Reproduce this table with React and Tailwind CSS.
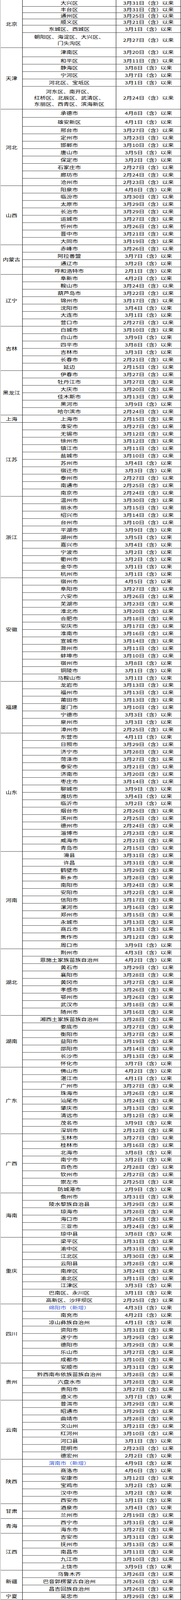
import React, { useEffect, useState } from "react";

// natural height of the whole table in px
const TABLE_HEIGHT = 5623;

// [area, date, height class, added]; rows without a height class are 26px tall
const provinces = [
  {
    name: "北京",
    rows: [
      ["大兴区", "3月31日", "h-[23px]"],
      ["丰台区", "3月31日", "h-[22px]"],
      ["通州区", "3月25日", "h-[22px]"],
      ["顺义区", "3月21日", "h-[22px]"],
      ["东城区、西城区", "3月1日"],
      [["朝阳区、海淀区、大兴区、", "门头沟区"], "2月27日", "h-[53px]"],
    ],
  },
  {
    name: "天津",
    rows: [
      ["津南区", "3月20日", "h-[32px]"],
      ["和平区", "3月11日"],
      ["静海区", "3月8日"],
      ["宁河区", "3月7日"],
      ["河北区、宝坻区", "3月1日"],
      [["河东区、南开区、", "红桥区、北辰区、武清区、", "东丽区、西青区、滨海新区"], "2月24日", "h-[80px]"],
    ],
  },
  {
    name: "河北",
    rows: [
      ["承德市", "4月8日", "h-[29px]"],
      ["雄安新区", "4月1日", "h-[32px]"],
      ["邢台市", "3月27日"],
      ["定州市", "3月23日"],
      ["邯郸市", "3月10日"],
      ["唐山市", "3月5日"],
      ["保定市", "3月2日"],
      ["石家庄市", "2月27日"],
      ["廊坊市", "2月24日"],
      ["沧州市", "2月23日"],
    ],
  },
  {
    name: "山西",
    rows: [
      ["阳泉市", "4月8日"],
      ["临汾市", "3月30日"],
      ["太原市", "3月29日"],
      ["长治市", "3月29日"],
      ["运城市", "3月27日"],
      ["忻州市", "3月26日"],
      ["晋中市", "3月21日"],
      ["大同市", "3月19日"],
    ],
  },
  {
    name: "内蒙古",
    rows: [
      ["赤峰市", "3月26日"],
      ["阿拉善盟", "3月7日"],
      ["通辽市", "3月2日"],
      ["呼和浩特市", "2月1日"],
    ],
  },
  {
    name: "辽宁",
    rows: [
      ["阜新市", "4月2日"],
      ["鞍山市", "3月24日"],
      ["葫芦岛市", "3月22日"],
      ["锦州市", "3月17日"],
      ["沈阳市", "3月4日"],
      ["大连市", "3月1日"],
      ["营口市", "2月27日"],
    ],
  },
  {
    name: "吉林",
    rows: [
      ["白城市", "3月10日"],
      ["白山市", "3月9日"],
      ["四平市", "3月8日"],
      ["吉林市", "3月3日"],
      ["长春市", "2月21日"],
      ["延边", "2月15日"],
    ],
  },
  {
    name: "黑龙江",
    rows: [
      ["伊春市", "3月27日"],
      ["牡丹江市", "3月27日"],
      ["大庆市", "3月20日"],
      ["佳木斯市", "3月13日"],
      ["黑河市", "3月9日"],
      ["哈尔滨市", "2月24日"],
    ],
  },
  { name: "上海", rows: [["上海市", "2月15日"]] },
  {
    name: "江苏",
    rows: [
      ["淮安市", "3月27日"],
      ["无锡市", "3月12日"],
      ["徐州市", "3月12日"],
      ["镇江市", "3月11日"],
      ["盐城市", "3月10日"],
      ["苏州市", "3月4日"],
      ["宿迁市", "3月3日"],
      ["泰州市", "2月27日"],
      ["南通市", "2月25日"],
      ["南京市", "2月24日"],
    ],
  },
  {
    name: "浙江",
    rows: [
      ["温州市", "3月30日"],
      ["丽水市", "3月15日"],
      ["绍兴市", "3月14日"],
      ["台州市", "3月10日"],
      ["平湖市", "3月9日"],
      ["湖州市", "3月5日"],
      ["嘉兴市", "3月4日"],
      ["宁波市", "3月2日"],
      ["衢州市", "3月2日"],
      ["金华市", "3月1日"],
      ["杭州市", "3月1日"],
    ],
  },
  {
    name: "安徽",
    rows: [
      ["宿州市", "4月5日"],
      ["阜阳市", "3月27日"],
      ["六安市", "3月26日"],
      ["芜湖市", "3月23日"],
      ["淮北市", "3月20日"],
      ["合肥市", "3月18日"],
      ["安庆市", "3月17日"],
      ["淮南市", "3月16日"],
      ["宣城市", "3月14日"],
      ["滁州市", "3月11日"],
      ["蚌埠市", "3月10日"],
      ["宿州市", "3月8日"],
      ["铜陵市", "3月1日"],
      ["马鞍山市", "3月1日"],
    ],
  },
  {
    name: "福建",
    rows: [
      ["龙岩市", "3月13日"],
      ["福州市", "3月13日"],
      ["莆田市", "3月13日"],
      ["厦门市", "3月10日"],
      ["宁德市", "3月3日"],
      ["泉州市", "3月3日"],
      ["漳州市", "2月25日"],
    ],
  },
  {
    name: "山东",
    rows: [
      ["东营市", "4月1日"],
      ["日照市", "3月29日"],
      ["济宁市", "3月28日"],
      ["菏泽市", "3月27日"],
      ["泰安市", "3月21日"],
      ["济南市", "3月20日"],
      ["枣庄市", "3月14日"],
      ["聊城市", "3月9日"],
      ["潍坊市", "3月4日"],
      ["临沂市", "3月2日"],
      ["烟台市", "2月26日"],
      ["滨州市", "2月25日"],
      ["德州市", "2月24日"],
      ["淄博市", "2月23日"],
      ["威海市", "2月21日"],
      ["青岛市", "2月15日"],
    ],
  },
  {
    name: "河南",
    rows: [
      ["滑县", "3月31日"],
      ["许昌", "3月31日"],
      ["鹤壁市", "3月29日"],
      ["新乡市", "3月28日"],
      ["南阳市", "3月24日"],
      ["安阳市", "3月22日"],
      ["信阳市", "3月17日"],
      ["漯河市", "3月16日"],
      ["郑州市", "3月15日"],
      ["永城市", "3月13日"],
      ["商丘市", "3月13日"],
      ["焦作市", "3月12日", "h-[28px]"],
      ["周口市", "3月9日", "h-[28px]"],
    ],
  },
  {
    name: "湖北",
    rows: [
      ["荆州市", "4月3日"],
      ["恩施土家族苗族自治州", "4月2日"],
      ["黄石市", "3月29日"],
      ["襄阳市", "3月28日"],
      ["黄冈市", "3月27日"],
      ["孝感市", "3月26日"],
      ["鄂州市", "3月26日"],
      ["武汉市", "3月18日"],
      ["随州市", "3月16日"],
    ],
  },
  {
    name: "湖南",
    rows: [
      ["湘西土家族苗族自治州", "3月28日"],
      ["娄底市", "3月27日"],
      ["衡阳市", "3月27日"],
      ["益阳市", "3月19日"],
      ["邵阳市", "3月14日"],
      ["长沙市", "3月13日"],
      ["怀化市", "3月7日"],
    ],
  },
  {
    name: "广东",
    rows: [
      ["佛山市", "4月2日"],
      ["湛江市", "4月1日"],
      ["广州市", "3月27日"],
      ["珠海市", "3月26日"],
      ["汕尾市", "3月24日"],
      ["肇庆市", "3月13日"],
      ["清远市", "3月12日"],
      ["茂名市", "3月9日"],
      ["深圳市", "2月12日"],
    ],
  },
  {
    name: "广西",
    rows: [
      ["玉林市", "3月27日"],
      ["桂林市", "3月16日"],
      ["北海市", "3月8日"],
      ["南宁市", "3月2日"],
      ["百色市", "2月28日"],
      ["钦州市", "2月27日"],
      ["崇左市", "2月25日"],
      ["防城港市", "2月9日"],
    ],
  },
  {
    name: "海南",
    rows: [
      ["儋州市", "3月31日"],
      ["陵水黎族自治县", "3月29日"],
      ["琼海市", "3月28日"],
      ["海口市", "3月26日"],
      ["三亚市", "3月24日"],
      ["琼中县", "3月8日"],
    ],
  },
  {
    name: "重庆",
    rows: [
      ["梁平区", "3月31日"],
      ["渝中区", "3月31日"],
      ["江北区", "3月30日"],
      ["云阳县", "3月28日"],
      ["南岸区", "3月24日"],
      ["渝北区", "3月11日"],
      ["江津区", "3月3日"],
      ["巴南区、永川区", "3月1日"],
      ["高新区、沙坪坝区", "2月25日"],
    ],
  },
  {
    name: "四川",
    rows: [
      ["绵阳市（新增）", "4月3日", null, true],
      ["南充市", "4月2日"],
      ["凉山彝族自治州", "4月1日"],
      ["资阳市", "3月31日"],
      ["遂宁市", "3月29日"],
      ["德阳市", "3月29日"],
      ["乐山市", "3月27日"],
      ["成都市", "3月10日"],
    ],
  },
  {
    name: "贵州",
    rows: [
      ["安顺市", "3月31日"],
      ["黔西南布依族苗族自治州", "3月28日"],
      ["六盘水市", "3月28日"],
      ["贵阳市", "3月27日"],
      ["遵义市", "3月7日"],
    ],
  },
  {
    name: "云南",
    rows: [
      ["普洱市", "3月29日"],
      ["昭通市", "3月29日"],
      ["曲靖市", "3月28日"],
      ["文山州", "3月21日"],
      ["红河州", "3月10日"],
      ["河口县", "3月1日"],
      ["昆明市", "2月23日"],
      ["德宏州", "2月2日"],
    ],
  },
  {
    name: "陕西",
    rows: [
      ["渭南市（新增）", "4月9日", null, true],
      ["商洛市", "4月6日"],
      ["安康市", "3月12日"],
      ["宝鸡市", "3月2日"],
      ["汉中市", "3月2日"],
      ["西安市", "3月1日"],
    ],
  },
  {
    name: "甘肃",
    rows: [
      ["酒泉市", "3月4日"],
      ["兰州市", "2月19日"],
    ],
  },
  {
    name: "青海",
    rows: [
      ["西宁市", "3月31日"],
      ["海东市", "3月27日"],
    ],
  },
  {
    name: "江西",
    rows: [
      ["吉安市", "3月31日"],
      ["抚州市", "3月13日"],
      ["南昌市", "3月11日"],
      ["九江市", "3月10日"],
      ["上饶市", "3月9日"],
    ],
  },
  {
    name: "新疆",
    rows: [
      ["乌鲁木齐", "3月26日"],
      ["巴音郭楞蒙古自治州", "3月26日"],
      ["昌吉回族自治州", "3月26日"],
    ],
  },
  { name: "宁夏", rows: [["吴忠市", "3月29日"]] },
];

const Row = ({ area, date, height, added }) => {
  const lines = Array.isArray(area) ? area : [area];
  return (
    <div className={`flex border-b border-black ${height || "h-[26px]"}`}>
      <div
        className={
          added
            ? "w-[240px] shrink-0 flex flex-col items-center justify-center text-center border-r border-black text-[#3a5bdc]"
            : "w-[240px] shrink-0 flex flex-col items-center justify-center text-center border-r border-black"
        }
      >
        {lines.map((line, i) => (
          <div key={i} className="whitespace-nowrap">
            {line}
          </div>
        ))}
      </div>
      <div className="flex-1 flex items-center justify-center whitespace-nowrap">
        {date + "（含）以来"}
      </div>
    </div>
  );
};

// squeeze the table vertically when the window is shorter than the table
const fitScale = () => Math.min(1, window.innerHeight / TABLE_HEIGHT);

const App = () => {
  const [scale, setScale] = useState(fitScale);

  useEffect(() => {
    const onResize = () => setScale(fitScale());
    window.addEventListener("resize", onResize);
    return () => window.removeEventListener("resize", onResize);
  }, []);

  return (
    <div className="overflow-hidden" style={{ height: TABLE_HEIGHT * scale }}>
      <div
        className="w-[464px] origin-top bg-white text-black text-[15px] leading-[22px] font-['Noto_Sans_CJK_SC','Noto_Sans',sans-serif] border-l-2 border-l-[#d0d0d0] border-r border-r-black"
        style={{ transform: `scaleY(${scale})` }}
      >
        {provinces.map((p) => (
          <div key={p.name} className="flex">
            <div className="w-[56px] shrink-0 flex items-center justify-center whitespace-nowrap border-r border-b border-black">
              {p.name}
            </div>
            <div className="flex-1">
              {p.rows.map(([area, date, height, added], i) => (
                <Row key={i} area={area} date={date} height={height} added={added} />
              ))}
            </div>
          </div>
        ))}
      </div>
    </div>
  );
};

export default App;
